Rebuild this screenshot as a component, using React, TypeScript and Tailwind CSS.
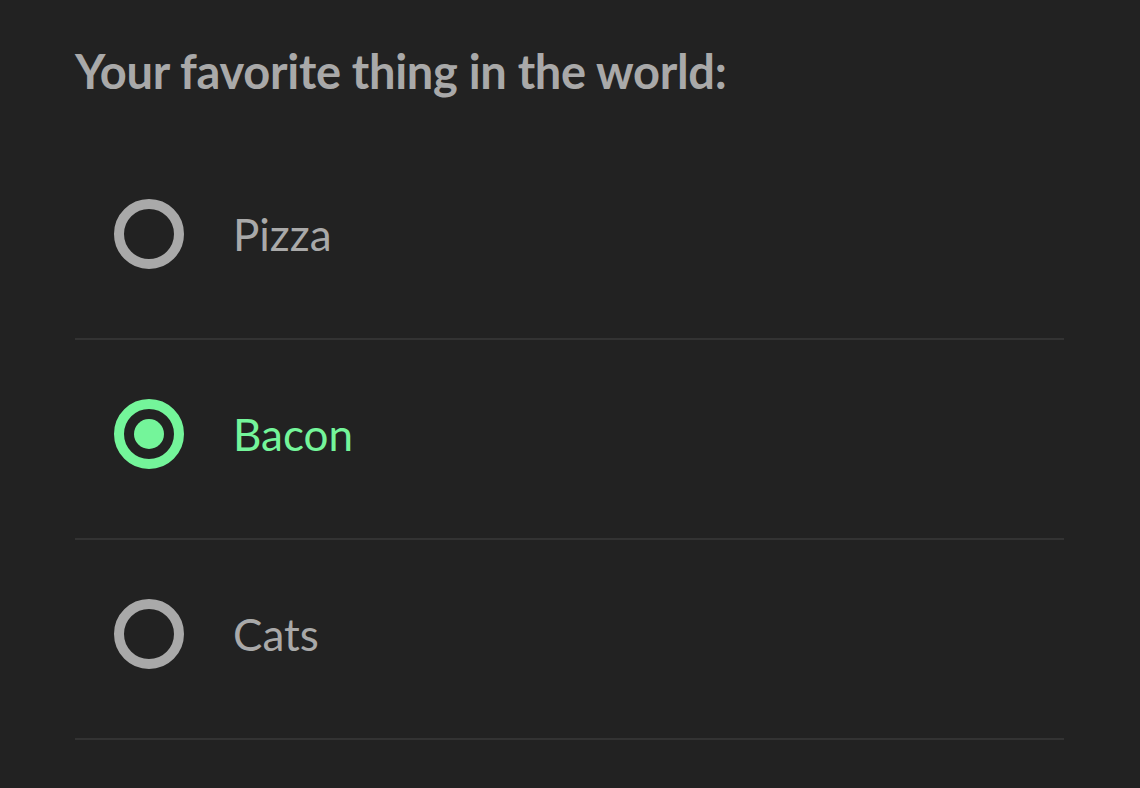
import { useState } from 'react';

const options = ['Pizza', 'Bacon', 'Cats'];

export default function App() {
  const [selected, setSelected] = useState('Bacon');

  return (
    <div className="min-h-screen w-full bg-[#222222] font-['Lato',sans-serif]">
      <div className="pl-[75px] w-[1064px]">
        {/* titre */}
        <div className="h-[140px] pt-[43px]">
          <h1 className="text-[47px] leading-[1.2] font-bold text-[#a9a9a9] tracking-[-0.3px]">
            Your favorite thing in the world:
          </h1>
        </div>

        {/* liste des choix */}
        <div className="flex flex-col">
          {options.map((opt) => {
            const active = selected === opt;
            return (
              <label
                key={opt}
                onClick={() => setSelected(opt)}
                className="h-[200px] pb-[10px] flex items-center border-b-2 border-[#333333] cursor-pointer"
              >
                <span
                  className={`ml-[39px] w-[70px] h-[70px] rounded-full border-[10px] flex items-center justify-center shrink-0 ${
                    active ? 'border-[#74f59a]' : 'border-[#a9a9a9]'
                  }`}
                >
                  {active && <span className="w-[30px] h-[30px] rounded-full bg-[#74f59a]" />}
                </span>
                <span
                  className={`ml-[49px] text-[44px] leading-none ${
                    active ? 'text-[#74f59a]' : 'text-[#a9a9a9]'
                  }`}
                >
                  {opt}
                </span>
              </label>
            );
          })}
        </div>
      </div>
    </div>
  );
}
